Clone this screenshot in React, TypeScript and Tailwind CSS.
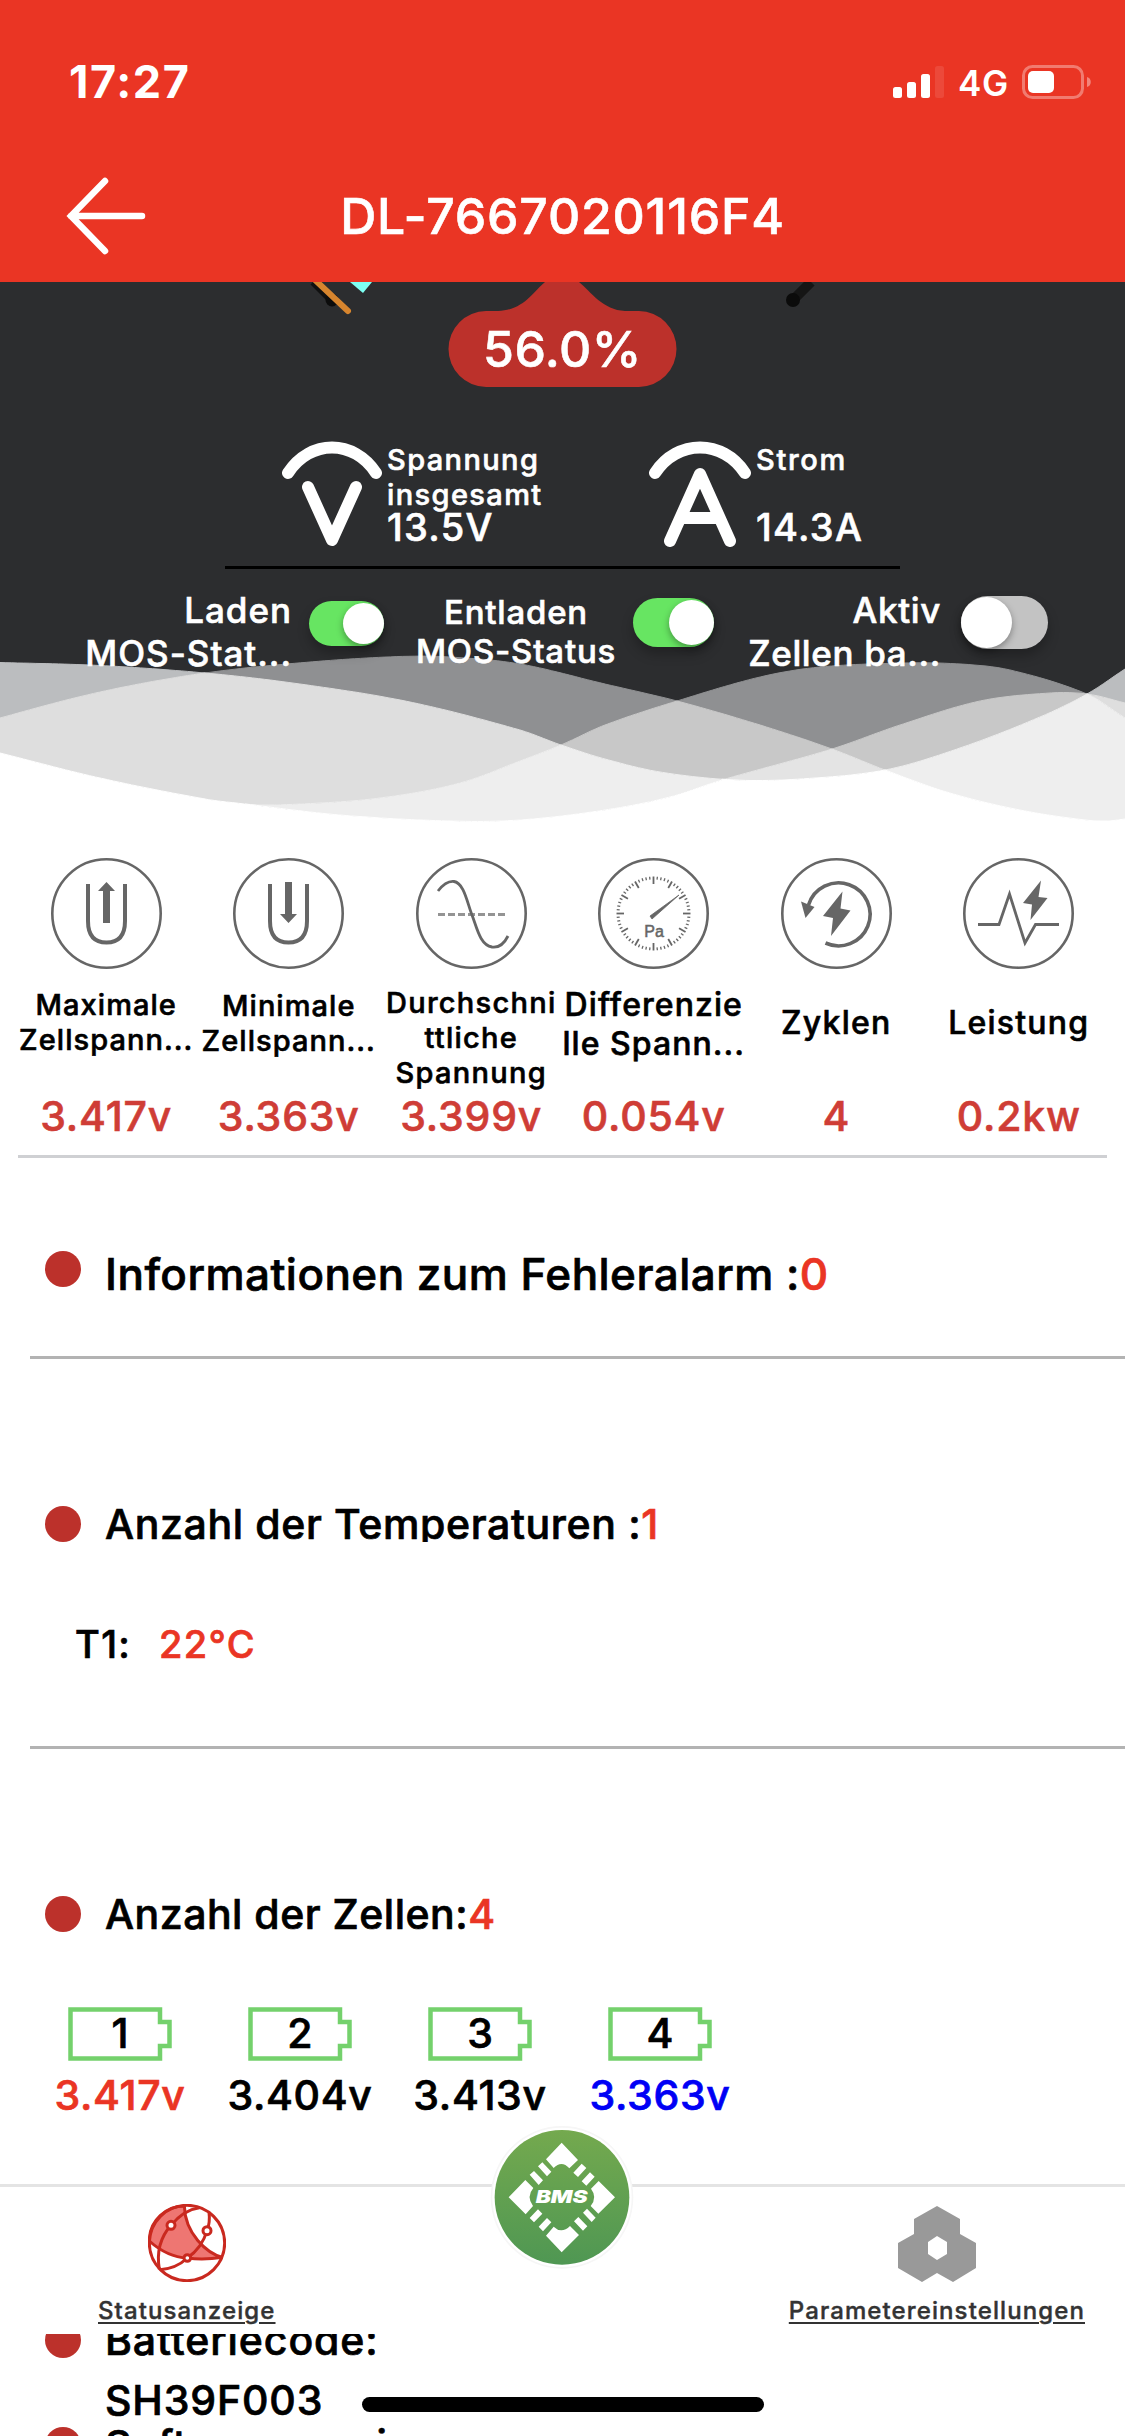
import type { ReactNode } from 'react';

const GREY = '#666666';

/* ---------- wave background ---------- */

type Pt = [number, number];

const WAVE_A: Pt[] = [
  [-60, 661], [0, 662.5], [100, 665.5], [205, 673], [300, 684], [410, 702], [520, 730], [561, 745], [605, 759], [660, 772],
  [735, 780], [800, 779], [885, 770], [960, 748], [1040, 717], [1087, 694], [1125, 669], [1160, 646],
];
const WAVE_B: Pt[] = [
  [-60, 736], [0, 718], [100, 692], [205, 673], [310, 662], [400, 656.5], [450, 657], [520, 664], [605, 684], [677, 701],
  [760, 725], [832, 749], [885, 770], [950, 793], [1020, 810], [1085, 820], [1108, 821], [1125, 819], [1160, 815],
];
const WAVE_C: Pt[] = [
  [180, 794], [245, 804], [290, 804.5], [380, 798], [460, 783], [520, 761], [561, 745], [605, 725], [677, 701], [760, 677],
  [820, 667], [905, 663], [960, 664], [1010, 670], [1087, 694], [1125, 718], [1160, 740],
];
const WAVE_D: Pt[] = [
  [-60, 738], [0, 753], [100, 778], [205, 799], [245, 804], [340, 815], [450, 821], [520, 820], [605, 810], [670, 797],
  [722, 780], [832, 749], [900, 725], [980, 701], [1050, 693], [1087, 694], [1125, 703], [1160, 713],
];

function heightAt(pts: Pt[], x: number) {
  let i = 1;
  while (i < pts.length - 3 && pts[i + 1][0] < x) i++;
  const [x0, y0] = pts[i - 1];
  const [x1, y1] = pts[i];
  const [x2, y2] = pts[i + 1];
  const [x3, y3] = pts[i + 2];
  const h = x2 - x1;
  const t = (x - x1) / h;
  const m1 = ((y2 - y0) / (x2 - x0)) * h;
  const m2 = ((y3 - y1) / (x3 - x1)) * h;
  return (
    (2 * t ** 3 - 3 * t ** 2 + 1) * y1 + (t ** 3 - 2 * t ** 2 + t) * m1 + (3 * t ** 2 - 2 * t ** 3) * y2 + (t ** 3 - t ** 2) * m2
  );
}

// Joins pieces of several waves into one outline
function outline(...parts: [Pt[], number, number][]) {
  const out: string[] = [];
  parts.forEach(([pts, from, to]) => {
    const n = Math.max(2, Math.ceil(Math.abs(to - from) / 6));
    for (let k = 0; k <= n; k++) {
      const x = from + ((to - from) * k) / n;
      out.push(`${x.toFixed(1)},${heightAt(pts, x).toFixed(1)}`);
    }
  });
  return out.join(' ');
}

// The thin stroke hides the seams between neighbouring areas
function Area({ color, points }: { color: string; points: string }) {
  return <polygon fill={color} stroke={color} strokeWidth="1" strokeLinejoin="round" points={points} />;
}

function Waves() {
  return (
    <svg className="absolute left-0 bottom-0 w-[1125px] h-[190px]" viewBox="0 640 1125 190">
      <Area color="#8f9092" points={outline([WAVE_B, 205, 677], [WAVE_C, 677, 561], [WAVE_A, 561, 205])} />
      <Area color="#8f9092" points={outline([WAVE_C, 677, 1087], [WAVE_D, 1087, 832], [WAVE_B, 832, 677])} />
      <Area color="#bbbdbf" points={outline([WAVE_A, 0, 205], [WAVE_B, 205, 0])} />
      <Area color="#bbbdbf" points={outline([WAVE_A, 1087, 1125], [WAVE_D, 1125, 1087])} />
      <Area color="#c8c8c8" points={outline([WAVE_C, 561, 677], [WAVE_B, 677, 832], [WAVE_D, 832, 722], [WAVE_A, 722, 561])} />
      <Area color="#c8c8c8" points={outline([WAVE_D, 832, 1087], [WAVE_A, 1087, 885], [WAVE_B, 885, 832])} />
      <Area color="#dedede" points={outline([WAVE_B, 0, 205], [WAVE_A, 205, 561], [WAVE_C, 561, 245], [WAVE_D, 245, 0])} />
      <Area color="#dedede" points={outline([WAVE_D, 1087, 1125], [WAVE_C, 1125, 1087])} />
      <Area color="#e4e4e4" points={outline([WAVE_D, 722, 832], [WAVE_B, 832, 885], [WAVE_A, 885, 722])} />
      <Area color="#eeeeee" points={outline([WAVE_A, 561, 722], [WAVE_D, 722, 245], [WAVE_C, 245, 561])} />
      <Area color="#eeeeee" points={outline([WAVE_A, 885, 1087], [WAVE_C, 1087, 1125], [WAVE_B, 1125, 885])} />
      <Area color="#ffffff" points={`${outline([WAVE_D, 0, 722], [WAVE_A, 722, 885], [WAVE_B, 885, 1125])} 1125,830 0,830`} />
    </svg>
  );
}

/* ---------- header ---------- */

function Header() {
  return (
    <header className="h-[282px] bg-[#ea3524] text-white">
      <div className="h-[164px] flex items-center justify-between pl-[69px] pr-[33px]">
        <span className="text-[45px] font-bold tracking-[0.035em]">17:27</span>
        <div className="flex items-center">
          <svg className="w-[51px] h-8" viewBox="0 0 51 32">
            <rect x="0" y="21" width="9" height="11" rx="2.5" fill="#fff" />
            <rect x="14" y="16" width="9" height="16" rx="2.5" fill="#fff" />
            <rect x="28" y="8" width="9" height="24" rx="2.5" fill="#fff" />
            <rect x="42" y="0" width="9" height="32" rx="2.5" fill="#fff" opacity="0.1" />
          </svg>
          <span className="ml-[14px] w-[50px] text-[35px] font-semibold tracking-[0.02em] pt-[3px]">4G</span>
          <svg className="ml-[14px] w-[70px] h-[34px]" viewBox="0 0 70 34">
            <rect x="1.5" y="1.5" width="59" height="31" rx="9" fill="none" stroke="#fff" strokeOpacity="0.35" strokeWidth="3" />
            <rect x="6" y="6" width="26" height="22" rx="5" fill="#fff" />
            <path d="M65 12c5 1 5 9 0 10z" fill="#fff" opacity="0.4" />
          </svg>
        </div>
      </div>
      <div className="h-[104px] flex items-center justify-center relative">
        <svg className="absolute left-[66px] top-[13px] w-20 h-[78px]" viewBox="0 0 80 78">
          <path d="M76 39H5M39 4 5 39l34 35" fill="none" stroke="#fff" strokeWidth="6.5" strokeLinecap="round" />
        </svg>
        <h1 className="text-[50px] font-medium tracking-[0.0155em] [-webkit-text-stroke:0.6px]">DL-7667020116F4</h1>
      </div>
    </header>
  );
}

/* ---------- overview panel ---------- */

function Switch({ on, track, thumb }: { on: boolean; track: string; thumb: string }) {
  return (
    <span className={`shrink-0 rounded-full flex shadow-[0_7px_12px_rgba(0,0,0,0.25)] ${track} ${on ? 'bg-[#67e562] justify-end' : 'bg-[#c3c3c3] justify-start'}`}>
      <span className={`rounded-full bg-white my-auto shadow-[0_3px_7px_rgba(0,0,0,0.35)] ${thumb}`} />
    </span>
  );
}

function Overview() {
  return (
    <section className="relative h-[548px] bg-[#2c2d2f] text-white font-medium [-webkit-text-stroke:0.6px]">
      <Waves />

      {/* bottom end of the gauge with the state of charge */}
      <div className="relative h-[105px]">
        <svg className="absolute inset-0 w-[1125px] h-[105px]" viewBox="0 0 1125 105">
          <path d="M313 0 331 18" stroke="#101010" strokeWidth="7" />
          <circle cx="332" cy="18" r="6.5" fill="#0c0c0c" />
          <path d="M314-3 348 29" stroke="#d7852e" strokeWidth="6" strokeLinecap="round" />
          <path d="M350 0h22l-9 11z" fill="#7dfff3" />
          <path d="M811 0 793 18" stroke="#151515" strokeWidth="10" />
          <circle cx="793" cy="18" r="7" fill="#0b0b0b" />
          <path d="M545 0h34c12 10 24 28 46 29h14a37.5 38 0 0 1 0 76H486a37.5 38 0 0 1 0-76h12c26-1 35-19 47-29z" fill="#bc312b" />
        </svg>
        <div className="relative h-full pt-[37px] text-center text-[50px] leading-[60px] tracking-[0.01em]">56.0%</div>
      </div>

      <div className="relative flex mt-[54px] h-[106px] pl-[282px]">
        <svg className="w-[100px] h-[106px]" viewBox="0 0 100 106" fill="none" stroke="#fff" strokeLinecap="round">
          <path d="M6 32c22-34 66-34 88 0" strokeWidth="12" />
          <path d="M26 46 50 99 74 46" strokeWidth="12" strokeLinejoin="round" />
        </svg>
        <div className="w-[267px] pl-[5px] pt-px text-[29px] leading-[35px] tracking-[0.048em]">
          <div className="w-[170px]">Spannung insgesamt</div>
          <div className="text-[38px] leading-[31px] tracking-[0.034em]">13.5V</div>
        </div>
        <svg className="w-[102px] h-[106px]" viewBox="0 0 102 106" fill="none" stroke="#fff" strokeLinecap="round">
          <path d="M6 32c22-34 68-34 90 0" strokeWidth="12" />
          <path d="M21 100 51 33l30 67M34 77h34" strokeWidth="12" strokeLinejoin="round" />
        </svg>
        <div className="pl-[5px] pt-px text-[29px] leading-[35px] tracking-[0.058em]">
          <div className="mb-[35px]">Strom</div>
          <div className="text-[38px] leading-[31px] tracking-[0.034em]">14.3A</div>
        </div>
      </div>

      <div className="relative mt-[19px] ml-[225px] w-[675px] h-[3px] bg-black" />

      <div className="relative flex items-start text-[35px] leading-[43px]">
        <div className="w-[292px] pt-[20px] text-right tracking-[0.028em]">
          Laden
          <br />
          MOS-Stat...
        </div>
        <div className="ml-[17px] mt-8 flex">
          <Switch on track="w-[75px] h-[45px]" thumb="size-[41px]" />
        </div>
        <div className="w-[249px] pl-[15px] pt-[24px] text-center text-[33px] leading-[39px] tracking-[0.024em]">
          Entladen
          <br />
          MOS-Status
        </div>
        <div className="mt-[29px] flex">
          <Switch on track="w-[81px] h-[49px]" thumb="size-[45px]" />
        </div>
        <div className="w-[227px] pt-[20px] text-right tracking-[0.018em]">
          Aktiv
          <br />
          Zellen ba...
        </div>
        <div className="ml-[20px] mt-[27px] flex">
          <Switch on={false} track="w-[87px] h-[53px]" thumb="size-[51px]" />
        </div>
      </div>
    </section>
  );
}

/* ---------- metrics ---------- */

function RoundIcon({ children }: { children: ReactNode }) {
  return (
    <svg className="size-[111px]" viewBox="0 0 111 111" fill="none" stroke={GREY}>
      <circle cx="55.5" cy="55.5" r="54.2" strokeWidth="2.6" />
      {children}
    </svg>
  );
}

const TUBE = 'M37 26v37c0 14 6 21.500 18.500 21.500S74 77 74 63V26';

const METRICS = [
  {
    lines: ['Maximale', 'Zellspann...'],
    style: 'pt-[18px] text-[29px] leading-[35px] tracking-[0.036em]',
    value: '3.417v',
    icon: (
      <>
        <path d={TUBE} strokeWidth="4" />
        <path d="M52 65V33h-5l8.500-9 8.500 9h-5v32z" fill={GREY} stroke="none" />
      </>
    ),
  },
  {
    lines: ['Minimale', 'Zellspann...'],
    style: 'pt-[19px] text-[29px] leading-[35px] tracking-[0.036em]',
    value: '3.363v',
    icon: (
      <>
        <path d={TUBE} strokeWidth="4" />
        <path d="M52 24v32h-5l8.500 9 8.500-9h-5V24z" fill={GREY} stroke="none" />
      </>
    ),
  },
  {
    lines: ['Durchschni', 'ttliche', 'Spannung'],
    style: 'pt-[16px] text-[29px] leading-[35px] tracking-[0.044em]',
    value: '3.399v',
    icon: (
      <>
        <path d="M22 33c7-9 12-10 16-9.500C48 25 51 44 56 57s8 30 20 32c7 1 12-3 16-11" strokeWidth="2.800" />
        <path d="M22 56.500h70" strokeWidth="3" strokeDasharray="7 3" opacity="0.7" />
      </>
    ),
  },
  {
    lines: ['Differenzie', 'lle Spann...'],
    style: 'pt-[16px] text-[32px] leading-[39px] tracking-[0.033em]',
    value: '0.054v',
    icon: (
      <>
        {Array.from({ length: 60 }, (_, i) => (
          <path
            key={i}
            d={i % 5 ? 'M55.500 18.500v3' : 'M55.500 18.500v7.500'}
            strokeWidth={i % 5 ? 1.3 : 1.8}
            transform={`rotate(${i * 6} 55.500 55.500)`}
          />
        ))}
        <path d="M52 58 81 37 54 61z" fill={GREY} stroke={GREY} strokeWidth="0.800" />
        <text x="56" y="78.500" textAnchor="middle" fontSize="16" fontFamily="Liberation Sans, sans-serif" fill={GREY} stroke={GREY} strokeWidth="0.500">
          Pa
        </text>
      </>
    ),
  },
  {
    lines: ['Zyklen'],
    style: 'pt-[36px] text-[32px] leading-[35px] tracking-[0.04em]',
    value: '4',
    icon: (
      <>
        <path d="M27.500 47a31.500 31.500 0 1 1 17 38" strokeWidth="3.600" />
        <path d="M20 43.500 33.500 49 24.500 60z" fill={GREY} stroke="none" />
        <path d="M61.500 33.500 42 58l10 2-2 18 19.500-25.500-10-2z" fill={GREY} stroke="none" />
      </>
    ),
  },
  {
    lines: ['Leistung'],
    style: 'pt-[36px] text-[32px] leading-[35px] tracking-[0.038em]',
    value: '0.2kw',
    icon: (
      <>
        <path d="M15 66.500h21L46.500 36 62 85l10.500-18.500H96" strokeWidth="2.800" />
        <path d="M78 22.500 60 45l9 1.500L67.500 62 84.500 40l-9-1z" fill={GREY} stroke="none" />
      </>
    ),
  },
];

function Metrics() {
  return (
    <section className="pt-7">
      <div className="grid grid-cols-6 px-[15px]">
        {METRICS.map((m) => (
          <div key={m.value} className="flex flex-col items-center font-medium [-webkit-text-stroke:0.6px]">
            <RoundIcon>{m.icon}</RoundIcon>
            <div className={`h-[122px] text-center whitespace-nowrap ${m.style}`}>
              {m.lines.map((line) => (
                <div key={line}>{line}</div>
              ))}
            </div>
            <div className="text-[41px] leading-[50px] tracking-[0.02em] text-[#cf3d36]">{m.value}</div>
          </div>
        ))}
      </div>
      <div className="mt-[14px] mx-[18px] h-[3px] bg-[#cfd0d3]" />
    </section>
  );
}

/* ---------- details ---------- */

function Row({ children, className = '' }: { children: ReactNode; className?: string }) {
  return (
    <div className={`flex h-9 pl-[45px] text-[41px] leading-9 ${className}`}>
      <span className="size-9 shrink-0 rounded-full bg-[#bc312b] mr-[24px]" />
      {children}
    </div>
  );
}

const CELLS = [
  { id: 1, value: '3.417v', color: 'text-[#ea3524]' },
  { id: 2, value: '3.404v', color: 'text-black' },
  { id: 3, value: '3.413v', color: 'text-black' },
  { id: 4, value: '3.363v', color: 'text-[#0000f5]' },
];

function Details() {
  return (
    <section className="text-black font-medium [-webkit-text-stroke:0.7px]">
      <Row className="mt-[93px]">
        <p className="pt-[5px] text-[44px] tracking-[0.0105em]">
          Informationen zum Fehleralarm :<span className="text-[#ea3524]">0</span>
        </p>
      </Row>
      <div className="mt-[69px] ml-[30px] h-[3px] bg-[#b3b3b3]" />

      <Row className="mt-[147px] overflow-hidden">
        <p className="tracking-[0.0155em]">
          Anzahl der Temperaturen :<span className="text-[#ea3524]">1</span>
        </p>
      </Row>
      <div className="mt-[82px] pl-[75px] flex h-10 text-[38px] leading-10 tracking-[0.036em]">
        <span className="w-[84px]">T1:</span>
        <span className="text-[#ea3524]">22°C</span>
      </div>
      <div className="mt-[82px] ml-[30px] h-[3px] bg-[#b3b3b3]" />

      <Row className="mt-[147px]">
        <p className="tracking-[0.012em]">
          Anzahl der Zellen:<span className="text-[#ea3524]">4</span>
        </p>
      </Row>
      <div className="mt-[75px] ml-[30px] flex text-[41px]">
        {CELLS.map((cell) => (
          <div key={cell.id} className="w-[180px] flex flex-col items-center">
            <div className="relative w-[104px] h-[54px] flex items-center justify-center">
              <svg className="absolute inset-0 w-full h-full" viewBox="0 0 104 54">
                <path d="M2.5 2.5H92V15H101.5V39H92V51.500H2.5Z" fill="none" stroke="#74d16c" strokeWidth="4.5" />
              </svg>
              <span className="relative">{cell.id}</span>
            </div>
            <div className={`mt-[9px] leading-[50px] tracking-[0.016em] ${cell.color}`}>{cell.value}</div>
          </div>
        ))}
      </div>

      <Row className="mt-[202px]">
        <p className="tracking-[0.0225em]">Batteriecode:</p>
      </Row>
      <p className="mt-[17px] pl-[105px] text-[41px] leading-[51px] tracking-[0.021em]">SH39F003</p>
      <Row className="mt-px">
        <p className="tracking-[0.0225em]">Softwareversion:</p>
      </Row>
    </section>
  );
}

/* ---------- tab bar ---------- */

function BmsLogo() {
  return (
    <svg className="absolute left-[480px] -top-[67px] w-[170px] h-40" viewBox="0 0 510 480">
      <defs>
        <linearGradient id="bms" x1="0" y1="0" x2="0" y2="1">
          <stop offset="0" stopColor="#74a94e" />
          <stop offset="1" stopColor="#4f9753" />
        </linearGradient>
      </defs>
      <circle cx="246" cy="232" r="214" fill="#f6f6f6" />
      <circle cx="246" cy="232" r="209" fill="#fff" />
      <circle cx="246" cy="232" r="202" fill="url(#bms)" />
      <g fill="#fff">
        <path d="M245 68 294 120 268 145Q245 120 221 144L198 118Z" />
        <path d="M245 397 297 345 270 318Q245 343 221 320L198 347Z" />
        <path d="M86 232 136 180 160 204Q138 230 159 258L137 283Z" />
        <path d="M405 232 356 183 333 206Q353 232 332 258L355 281Z" />
        <path d="M174 139 187 127 214 155 201 169ZM149 164 162 153 189 181 176 195Z" />
        <path d="M305 131 319 144 294 171 280 158ZM330 157 344 170 319 197 305 184Z" />
        <path d="M149 294 174 268 187 281 162 307ZM176 320 201 294 214 307 189 334Z" />
        <path d="M309 278 321 266 347 293 335 306ZM282 304 295 291 322 319 309 332Z" />
      </g>
      <text
        x="245"
        y="248"
        textAnchor="middle"
        textLength="156"
        lengthAdjust="spacingAndGlyphs"
        fontFamily="Inter, sans-serif"
        fontSize="54"
        fontWeight="900"
        fontStyle="italic"
        fill="#fff"
      >
        BMS
      </text>
    </svg>
  );
}

function TabBar() {
  return (
    <nav className="absolute left-0 top-[2184px] w-full h-[150px] bg-white border-t-3 border-[#e4e4e4] text-[24px] leading-[30px] font-medium text-[#333333]">
      <div className="flex justify-between">
        <div className="ml-[98px] mt-[17px] flex flex-col items-center">
          <svg className="size-[78px]" viewBox="444 102 234 234" fill="none" stroke="#c9291f" strokeWidth="9">
            <path d="M553 108C500 108 448 150 448 213 478 240 520 262 562 264 600 270 630 268 668 262 620 250 555 190 553 108Z" fill="#ee7672" />
            <circle cx="561" cy="219" r="113" />
            <path d="M598 113C560 118 530 145 513 166 478 205 470 250 478 298" />
            <path d="M627 126C630 150 628 165 621 182 610 220 590 245 562 264 540 285 510 297 480 299" />
            <circle cx="513" cy="166" r="12" fill="#fff" />
            <circle cx="621" cy="182" r="12" fill="#fff" />
            <circle cx="562" cy="264" r="10" fill="#fff" />
          </svg>
          <span className="mt-[14px] tracking-[0.046em] underline decoration-2 underline-offset-[3px] [-webkit-text-stroke:0.4px]">
            Statusanzeige
          </span>
        </div>
        <div className="mr-[40px] mt-[19px] flex flex-col items-center">
          <svg className="w-[78px] h-[76px]" viewBox="0 0 78 76">
            <path
              d="M39 0 62 13V28L78 37V62L55 76 39 67 24 76 0 62V37L16 28V13ZM39 30 30 36V48L39 54 49 48V36Z"
              fill="#999999"
              fillRule="evenodd"
            />
          </svg>
          <span className="mt-[14px] tracking-[0.046em] underline decoration-2 underline-offset-[3px] [-webkit-text-stroke:0.4px]">
            Parametereinstellungen
          </span>
        </div>
      </div>
      <BmsLogo />
    </nav>
  );
}

export default function App() {
  return (
    <div className="relative w-[1125px] h-[2436px] overflow-hidden bg-white font-['Inter','Liberation_Sans',sans-serif]">
      <Header />
      <Overview />
      <Metrics />
      <Details />
      <TabBar />
      <div className="absolute left-[362px] bottom-6 w-[402px] h-[15px] rounded-full bg-black" />
    </div>
  );
}
